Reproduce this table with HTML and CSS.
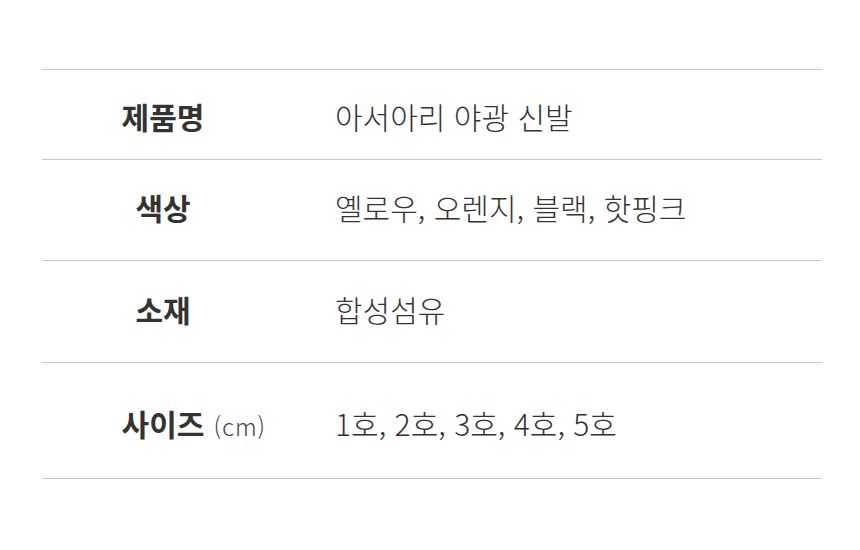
FILE: index.html
```html
<!DOCTYPE html>
<html lang="ko">
<head>
<meta charset="utf-8">
<link rel="stylesheet" href="styles.css">
</head>
<body>
<div class="spec">
  <div class="row r1">
    <div class="label">제품명</div>
    <div class="value">아서아리 야광 신발</div>
  </div>
  <div class="row r2">
    <div class="label">색상</div>
    <div class="value">옐로우, 오렌지, 블랙, 핫핑크</div>
  </div>
  <div class="row r3">
    <div class="label">소재</div>
    <div class="value">합성섬유</div>
  </div>
  <div class="row r4">
    <div class="label">사이즈<span class="unit"><span>(cm)</span></span></div>
    <div class="value">1호, 2호, 3호, 4호, 5호</div>
  </div>
</div>
</body>
</html>
```
FILE: styles.css
```css
html, body {
  margin: 0;
  padding: 0;
  background: #ffffff;
}
body {
  font-family: "Noto Sans CJK KR", "Noto Sans", sans-serif;
  color: #333333;
}
.spec {
  margin: 69px 0 0 42px;
  width: 780px;
  border-bottom: 1px solid #c8c8c8;
}
.row {
  display: flex;
  align-items: center;
  border-top: 1px solid #c8c8c8;
  box-sizing: border-box;
}
.r1 { height: 90px; padding-top: 2px; }
.r2 { height: 101px; padding-bottom: 6px; }
.r3 { height: 102px; padding-bottom: 6px; }
.r4 { height: 116px; padding-top: 4px; }
.label {
  width: 242px;
  flex: none;
  text-align: center;
  font-size: 30px;
  font-weight: 700;
  color: #333333;
  line-height: 1;
}
.unit {
  display: inline-block;
  width: 0;
  white-space: nowrap;
  text-align: left;
}
.unit span {
  margin-left: 9px;
  font-size: 24px;
  font-weight: 300;
  letter-spacing: 1px;
  color: #444444;
}
.value {
  padding-left: 51px;
  font-size: 30px;
  font-weight: 300;
  color: #333333;
  line-height: 1;
}
```
